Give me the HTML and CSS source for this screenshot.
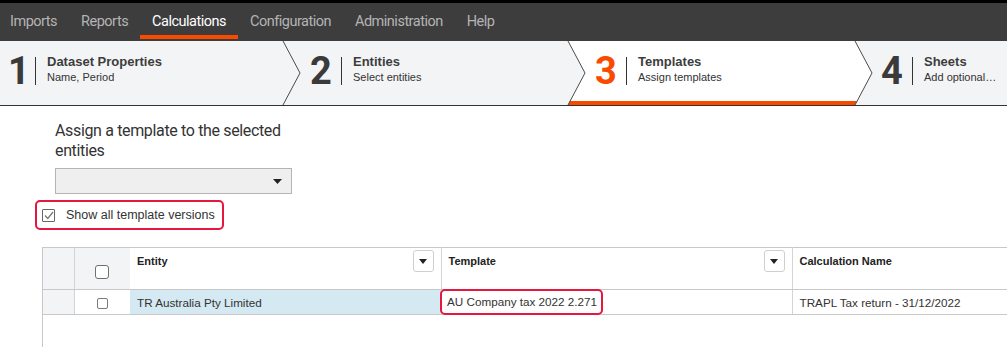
FILE: index.html
```html
<!DOCTYPE html>
<html lang="en">
<head>
  <meta charset="UTF-8">
  <title>Calculations - Assign templates</title>
  <link rel="stylesheet" href="styles.css">
</head>
<body>
  <nav class="menu">
    <a href="#">Imports</a>
    <a href="#">Reports</a>
    <a href="#" class="active">Calculations</a>
    <a href="#">Configuration</a>
    <a href="#">Administration</a>
    <a href="#">Help</a>
  </nav>

  <div class="stepper">
    <svg class="stepper-art" viewBox="0 0 1007 64" width="1007" height="64">
      <polygon points="568,0 855,0 872,32 855,64 568,64 585,32" fill="#fff"/>
      <polygon points="570,60 857,60 855,64 568,64" fill="#fa4a00"/>
      <g fill="none" stroke="#4a4a4a" stroke-width="1">
        <polyline points="283,0 300,32 283,64"/>
        <polyline points="568,0 585,32 568,64"/>
        <polyline points="855,0 872,32 855,64"/>
      </g>
    </svg>
    <div class="step step-1">
      <span class="num">1</span><span class="bar"></span>
      <div class="txt"><div class="title">Dataset Properties</div><div class="sub">Name, Period</div></div>
    </div>
    <div class="step step-2">
      <span class="num">2</span><span class="bar"></span>
      <div class="txt"><div class="title">Entities</div><div class="sub">Select entities</div></div>
    </div>
    <div class="step step-3 current">
      <span class="num">3</span><span class="bar"></span>
      <div class="txt"><div class="title">Templates</div><div class="sub">Assign templates</div></div>
    </div>
    <div class="step step-4">
      <span class="num">4</span><span class="bar"></span>
      <div class="txt"><div class="title">Sheets</div><div class="sub">Add optional…</div></div>
    </div>
  </div>

  <main class="content">
    <div class="assign">
      <div class="assign-label">Assign a template to the selected entities</div>
      <div class="dropdown">
        <svg width="9" height="5" viewBox="0 0 9 5"><polygon points="0,0 9,0 4.5,5" fill="#222"/></svg>
      </div>
    </div>

    <label class="versions hl">
      <span class="check">
        <svg width="10" height="9" viewBox="0 0 10 9"><polyline points="1,4.5 3.8,7.5 9,1" fill="none" stroke="#777" stroke-width="1.3"/></svg>
      </span>
      Show all template versions
    </label>

    <div class="grid">
      <table>
        <colgroup>
          <col class="c-hier"><col class="c-sel"><col class="c-entity"><col class="c-tpl"><col class="c-calc">
        </colgroup>
        <thead>
          <tr>
            <th class="hier"></th>
            <th class="sel"><span class="box big"></span></th>
            <th class="sep"><div class="head"><span>Entity</span><button class="filter"><svg width="8" height="5" viewBox="0 0 8 5"><polygon points="0,0 8,0 4,5" fill="#222"/></svg></button></div></th>
            <th class="sep"><div class="head"><span>Template</span><button class="filter"><svg width="8" height="5" viewBox="0 0 8 5"><polygon points="0,0 8,0 4,5" fill="#222"/></svg></button></div></th>
            <th><div class="head"><span>Calculation Name</span></div></th>
          </tr>
        </thead>
        <tbody>
          <tr>
            <td class="hier"></td>
            <td class="sel"><span class="box"></span></td>
            <td class="entity">TR Australia Pty Limited</td>
            <td class="tpl"><span class="tpl-hl hl">AU Company tax 2022 2.271</span></td>
            <td class="calc">TRAPL Tax return - 31/12/2022</td>
          </tr>
        </tbody>
      </table>
    </div>
  </main>
</body>
</html>
```

FILE: styles.css
```css
html, body { height: 100%; margin: 0; overflow: hidden; background: #fff; }
body { font-family: "Liberation Sans", Arial, sans-serif; color: #333; }

/* top menu */
.menu {
  display: flex; height: 38px; border-top: 3px solid #000; background: #3d3d3d;
}
.menu a {
  padding: 0 12px; line-height: 38px; color: #b4b4b4; text-decoration: none;
  font-family: Roboto, "Liberation Sans", sans-serif; font-size: 14.5px; letter-spacing: -0.5px;
}
.menu a:first-child { padding-left: 10px; }
.menu a.active {
  color: #fff;
  background: linear-gradient(#fa4a00, #fa4a00) no-repeat left bottom 2px / 100% 4px;
}

/* wizard steps */
.stepper {
  display: grid; grid-template-columns: 283px 285px 287px 1fr; height: 64px;
  background: #f3f4f5; border-bottom: 1px solid #333;
}
.stepper-art { grid-area: 1 / 1 / 2 / 5; display: block; }
.step { grid-row: 1; display: flex; align-items: center; padding: 0 0 5px 27px; min-width: 0; }
.step-1 { grid-column: 1; padding-left: 8px; }
.step-2 { grid-column: 2; }
.step-3 { grid-column: 3; }
.step-4 { grid-column: 4; padding-left: 26px; }
.num {
  width: 22px; font-family: Roboto, "Liberation Sans", sans-serif; font-weight: 700;
  font-size: 38px; line-height: 30px; color: #3a3a3a;
}
.step-1 .num { width: 18px; }
.current .num { color: #fa4a00; }
.bar { width: 1px; height: 28px; background: #333; margin: 0 11px 0 9px; }
.txt { margin-top: -3px; white-space: nowrap; }
.title { font-size: 13px; line-height: 16px; font-weight: 700; color: #3d3d3d; }
.sub { font-size: 11px; line-height: 14px; color: #333; }

/* assign panel */
.content { padding: 15px 0 0 35px; }
.assign { padding-left: 20px; }
.assign-label {
  width: 237px; font-family: Roboto, "Liberation Sans", sans-serif; font-size: 16px;
  line-height: 20px; letter-spacing: -0.35px; color: #333;
}
.dropdown {
  width: 226px; height: 24px; margin-top: 7px; border: 1px solid #b4b4b4; background: #efefef;
  display: flex; align-items: center; justify-content: flex-end; padding-right: 9px;
}

.hl { border: 2px solid #e5173f; border-radius: 5px; }
.versions {
  display: inline-flex; align-items: center; gap: 11px; height: 26px; margin-top: 6px;
  padding: 0 7px 0 5px; font-size: 12.5px; color: #333;
}
.check {
  width: 11px; height: 11px; border: 1px solid #666; border-radius: 1px;
  display: flex; align-items: center; justify-content: center;
}

/* grid */
.grid { margin: 17px 0 0 7px; height: 100px; border-left: 1px solid #c8c8c8; }
table { border-collapse: collapse; table-layout: fixed; width: 964px; border-top: 1px solid #c8c8c8; }
.c-hier { width: 31px; }
.c-sel { width: 56px; }
.c-entity { width: 311px; }
.c-tpl { width: 351px; }
th, td { padding: 0; text-align: left; border-bottom: 1px solid #c8c8c8; }
thead tr { height: 42px; }
tbody tr { height: 23px; }
th { vertical-align: top; font-size: 11px; font-weight: 700; color: #222; }
.hier { background: #f3f4f5; border-right: 1px solid #d4d4d4; }
th.sel { background: #f3f4f5; vertical-align: middle; text-align: center; }
td.sel { text-align: center; }
th.sep { border-right: 1px solid #d4d4d4; }
.head { display: flex; justify-content: space-between; padding: 2px 7px 0 7px; }
.head span { padding-top: 5px; }
.filter {
  width: 21px; height: 22px; padding: 0; border: 1px solid #cfcfcf; border-radius: 3px; background: #fff;
  display: flex; align-items: center; justify-content: center;
}
.box { display: inline-block; width: 9px; height: 9px; border: 1px solid #7a7a7a; border-radius: 2px; background: #fff; vertical-align: middle; }
.box.big { width: 12px; height: 12px; border-radius: 3px; margin-top: 6px; border-color: #707070; }
td { font-size: 11.7px; color: #333; padding: 0 7px; vertical-align: middle; }
td.hier, td.sel { padding: 0; }
td.entity { background: #d4e9f2; }
td.tpl { padding: 0; border-right: 1px solid #d4d4d4; }
.tpl-hl {
  display: inline-block; height: 22px; line-height: 22px; padding: 0 4px 0 5px;
  margin: -1px 0 -1px -1px; vertical-align: middle;
}
```
